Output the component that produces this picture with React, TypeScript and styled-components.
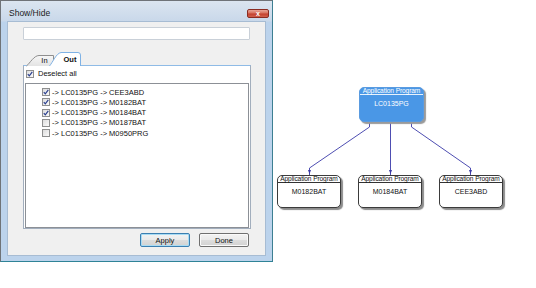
import React from "react";
import styled, { createGlobalStyle, css } from "styled-components";

const Global = createGlobalStyle`
  html, body { margin: 0; padding: 0; background: #ffffff; }
  body { font-family: "Liberation Sans", Arial, sans-serif; }
  * { box-sizing: border-box; }
`;

const Page = styled.div`
  display: flex;
  width: 536px;
  height: 288px;
  background: #fff;
`;

const Window = styled.div`
  width: 273px;
  height: 262px;
  display: flex;
  flex-direction: column;
  border: 1px solid #6f7378;
  border-right-color: #3d7f92;
  border-bottom-color: #2f8397;
  background: linear-gradient(#dbe5f0 0px, #c9d8ea 20px, #bcd3ec 21px, #bcd3ec 100%);
  padding: 0 6px 5px 6px;
`;

const TitleBar = styled.div`
  height: 20px;
  display: flex;
  align-items: center;
  justify-content: space-between;
  padding-left: 2px;
`;

const Title = styled.span`
  font-size: 8.5px;
  color: #1b1b1b;
  margin-top: 4px;
`;

const CloseBtn = styled.div`
  width: 22px;
  height: 9px;
  margin-right: -3px;
  margin-top: 5px;
  border: 1px solid #8a2c22;
  border-radius: 2px;
  background: linear-gradient(#e8a597 0%, #d7705e 45%, #c4412e 55%, #d0604c 100%);
  display: flex;
  align-items: center;
  justify-content: center;
  color: #fff;
  font-size: 7px;
  font-weight: bold;
  line-height: 1;
`;

const Client = styled.div`
  flex: 1;
  background: #f0f0f0;
  border: 1px solid #a7bcd3;
  padding: 5px 16px 0 15px;
  display: flex;
  flex-direction: column;
`;

const TextInput = styled.div`
  width: 227px;
  height: 13px;
  background: #fff;
  border: 1px solid #c9d0d8;
  border-radius: 1px;
`;

const TabStrip = styled.div`
  display: flex;
  margin-top: 12px;
  padding-left: 3px;
  height: 14px;
  align-items: flex-end;
  position: relative;
  z-index: 1;
`;

const Tab = styled.div<{ $active?: boolean }>`
  position: relative;
  display: flex;
  align-items: center;
  justify-content: center;
  font-size: 7.5px;
  color: #111111;
  ${(p) =>
    p.$active
      ? css`
          width: 32px;
          height: 14px;
          margin-left: -5px;
          font-weight: bold;
          padding: 1px 0 0 10px;
        `
      : css`
          width: 28px;
          height: 11px;
          padding: 0 0 0 9px;
        `}
`;

const TabShape = styled.svg`
  position: absolute;
  inset: 0;
  overflow: visible;
`;

const TabLabel = styled.span`
  position: relative;
  color: #111111;
`;

const Panel = styled.div`
  width: 228px;
  height: 164px;
  margin-top: -1px;
  background: #fff;
  border: 1px solid #a2aebd;
  border-top-color: #8fbbe6;
  padding: 3px 1px 0 1px;
  display: flex;
  flex-direction: column;
`;

const CheckRow = styled.div`
  display: flex;
  align-items: center;
  gap: 4px;
  height: 9px;
  font-size: 7.5px;
  color: #111;
  padding-left: 1px;
`;

const Box = styled.span`
  width: 8px;
  height: 8px;
  border: 1px solid #8e8f8f;
  background: linear-gradient(135deg, #dcdcdc, #fbfbfb);
  display: inline-flex;
  align-items: center;
  justify-content: center;
  flex: none;
`;

const ListBox = styled.div`
  margin-top: 5px;
  height: 145px;
  border: 1px solid #8c9096;
  padding: 3px 0 0 16px;
  display: flex;
  flex-direction: column;
`;

const ListItem = styled.div`
  display: flex;
  align-items: center;
  gap: 2px;
  height: 10.25px;
  font-size: 7.5px;
  color: #111;
  white-space: nowrap;
`;

const ButtonRow = styled.div`
  display: flex;
  justify-content: flex-end;
  gap: 9px;
  margin-top: 4px;
`;

const Button = styled.div<{ $focused?: boolean }>`
  width: 50px;
  height: 14px;
  border: 1px solid ${(p) => (p.$focused ? "#3c7fb1" : "#707070")};
  border-radius: 2px;
  background: linear-gradient(#f3f3f3 0%, #ebebeb 48%, #dddddd 52%, #d2d2d2 100%);
  box-shadow: inset 0 0 0 1px ${(p) => (p.$focused ? "#a9dcf4" : "#fafafa")};
  font-size: 7.5px;
  color: #111;
  display: flex;
  align-items: center;
  justify-content: center;
`;

const Canvas = styled.div`
  position: relative;
  width: 263px;
  height: 288px;
`;

const Wires = styled.svg`
  position: absolute;
  inset: 0;
`;

const Node = styled.div<{ $x: number; $y: number; $primary?: boolean }>`
  position: absolute;
  left: ${(p) => p.$x}px;
  top: ${(p) => p.$y}px;
  width: ${(p) => (p.$primary ? 65 : 64)}px;
  height: ${(p) => (p.$primary ? 35 : 33)}px;
  border-radius: 5px;
  border: 1px solid ${(p) => (p.$primary ? "#5a9be0" : "#3b3b3b")};
  background: ${(p) => (p.$primary ? "#4a97e6" : "#ffffff")};
  color: ${(p) => (p.$primary ? "#ffffff" : "#111111")};
  box-shadow: 2px 2px 1px ${(p) => (p.$primary ? "#9a9a9a" : "#8c8c8c")};
  display: flex;
  flex-direction: column;
  overflow: hidden;
`;

const NodeHeader = styled.div<{ $primary?: boolean }>`
  height: 7px;
  border-bottom: 1px solid ${(p) => (p.$primary ? "#e8f2fc" : "#333333")};
  font-size: 6.6px;
  line-height: 6px;
  text-align: center;
  white-space: nowrap;
  letter-spacing: -0.1px;
`;

const NodeName = styled.div`
  padding-top: 5px;
  font-size: 7px;
  line-height: 8px;
  text-align: center;
`;

const Check = () => (
  <svg width="6" height="6" viewBox="0 0 6 6">
    <path d="M0.8 3.2 L2.3 4.8 L5.3 0.8" fill="none" stroke="#2a3f8f" strokeWidth="1.2" />
  </svg>
);

const items = [
  { label: "-> LC0135PG -> CEE3ABD", checked: true },
  { label: "-> LC0135PG -> M0182BAT", checked: true },
  { label: "-> LC0135PG -> M0184BAT", checked: true },
  { label: "-> LC0135PG -> M0187BAT", checked: false },
  { label: "-> LC0135PG -> M0950PRG", checked: false },
];

const children = [
  { x: 4, name: "M0182BAT" },
  { x: 85, name: "M0184BAT" },
  { x: 166, name: "CEE3ABD" },
];

export default function App() {
  return (
    <>
      <Global />
      <Page>
        <Window>
          <TitleBar>
            <Title>Show/Hide</Title>
            <CloseBtn>x</CloseBtn>
          </TitleBar>
          <Client>
            <TextInput />
            <TabStrip>
              <Tab>
                <TabShape width="28" height="11" viewBox="0 0 28 11">
                  <defs>
                    <linearGradient id="tg" x1="0" y1="0" x2="0" y2="1">
                      <stop offset="0" stopColor="#f7f7f7" />
                      <stop offset="1" stopColor="#e3e3e3" />
                    </linearGradient>
                  </defs>
                  <path d="M0.5 11 C4 8, 8 0.5, 13 0.5 H27.5 V11" fill="url(#tg)" stroke="#8e8e8e" strokeWidth="1" />
                </TabShape>
                <TabLabel>In</TabLabel>
              </Tab>
              <Tab $active>
                <TabShape width="32" height="14" viewBox="0 0 32 14">
                  <path d="M0.5 14 C4 10, 7 1.5, 12 0.5 H29 Q31.5 0.5 31.5 3 V14" fill="#ffffff" stroke="#7fb2e5" strokeWidth="1" />
                </TabShape>
                <TabLabel>Out</TabLabel>
              </Tab>
            </TabStrip>
            <Panel>
              <CheckRow>
                <Box>
                  <Check />
                </Box>
                Deselect all
              </CheckRow>
              <ListBox>
                {items.map((it) => (
                  <ListItem key={it.label}>
                    <Box>{it.checked && <Check />}</Box>
                    {it.label}
                  </ListItem>
                ))}
              </ListBox>
            </Panel>
            <ButtonRow>
              <Button $focused>Apply</Button>
              <Button>Done</Button>
            </ButtonRow>
          </Client>
        </Window>
        <Canvas>
          <Wires width="263" height="288" viewBox="0 0 263 288">
            <g fill="none" stroke="#4e4eb2" strokeWidth="1">
              <path d="M96.5 122 V127 L36.5 168 V175" />
              <path d="M117.5 122 V175" />
              <path d="M138.5 122 V127 L197.5 168 V175" />
            </g>
            <g fill="#3a3aa6">
              <path d="M35 170 H38 L36.5 174 Z" />
              <path d="M116 170 H119 L117.5 174 Z" />
              <path d="M196 170 H199 L197.5 174 Z" />
            </g>
          </Wires>
          <Node $x={86} $y={87} $primary>
            <NodeHeader $primary>Application Program</NodeHeader>
            <NodeName>LC0135PG</NodeName>
          </Node>
          {children.map((c) => (
            <Node key={c.name} $x={c.x} $y={175}>
              <NodeHeader>Application Program</NodeHeader>
              <NodeName>{c.name}</NodeName>
            </Node>
          ))}
        </Canvas>
      </Page>
    </>
  );
}
